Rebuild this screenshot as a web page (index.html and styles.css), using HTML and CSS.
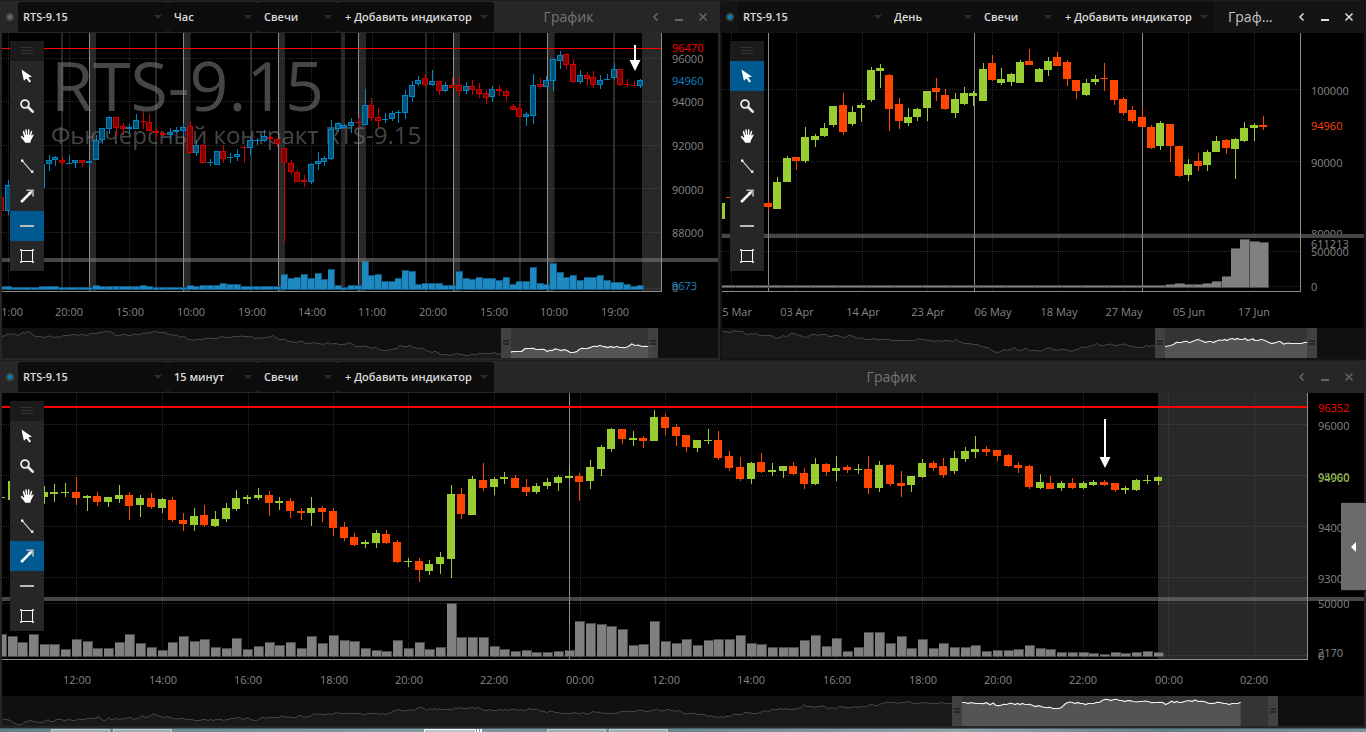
FILE: index.html
```html
<!DOCTYPE html>
<html lang="ru">
<head>
<meta charset="utf-8">
<title>RTS-9.15</title>
<link rel="stylesheet" href="styles.css">
</head>
<body>
<svg class="defs" aria-hidden="true">
  <symbol id="i-cursor" viewBox="0 0 14 14"><path d="M1.5.5 L12 7.8 L8.3 8.2 L11 12.4 L9.3 13.6 L6.5 9.4 L3.9 11.8 Z" fill="#fff"/></symbol>
  <symbol id="i-zoom" viewBox="0 0 14 14"><circle cx="5" cy="5" r="3.9" fill="none" stroke="#eee" stroke-width="1.8"/><path d="M8 8 L12.7 12.7" stroke="#eee" stroke-width="2.6" stroke-linecap="round"/></symbol>
  <symbol id="i-hand" viewBox="0 0 14 14"><path d="M4.6 7 L3.6 2.6 M6.4 6.5 L6.1 1 M8.4 6.5 L8.7 1 M10.2 7 L11.5 2.6" stroke="#fff" stroke-width="1.5" stroke-linecap="round"/><path d="M4 6.3 L11 6 L12 6.4 L13.2 5.2 Q14 5.3 13.6 6.3 L10.6 12 L10.4 13.8 L5 13.8 L4.5 12.4 L.9 8.2 Q.6 7 1.7 7.1 L4.2 9 Z" fill="#fff"/></symbol>
  <symbol id="i-line" viewBox="0 0 14 14"><path d="M2 1.5 L12 13" stroke="#eee" stroke-width="1.1"/><rect x="1" y=".5" width="2.4" height="2.4" fill="#eee"/><rect x="11" y="11.5" width="2.4" height="2.4" fill="#eee"/></symbol>
  <symbol id="i-arrow" viewBox="0 0 14 14"><path d="M1.2 13 L11 3.2" stroke="#fff" stroke-width="2.6"/><path d="M6.6 1.2 H13 V7.4" fill="none" stroke="#bbb" stroke-width="1.6"/><path d="M8 3.5 L12.3 1.7 L10.7 6 Z" fill="#fff"/></symbol>
  <symbol id="i-hline" viewBox="0 0 14 14"><path d="M0 7 H14" stroke="#bbb" stroke-width="2"/></symbol>
  <symbol id="i-rect" viewBox="0 0 14 14"><rect x="1.5" y="1.5" width="11" height="11" fill="none" stroke="#fff" stroke-width="1"/><path d="M0 0h2v2H0zM12 0h2v2h-2zM0 12h2v2H0zM12 12h2v2h-2z" fill="#ccc"/></symbol>
</svg>

<main class="desk">
  <section class="window" id="hour">
    <header class="bar">
      <input class="link-dot link-dot--idle" type="radio" name="link-hour" aria-label="Связь окон">
      <span class="pick pick--symbol"><select aria-label="Инструмент"><option>RTS-9.15</option></select></span>
      <span class="pick pick--frame"><select aria-label="Таймфрейм"><option>Час</option><option>День</option><option>15 минут</option></select></span>
      <span class="pick pick--style"><select aria-label="Тип графика"><option>Свечи</option></select></span>
      <button class="add" type="button">+ Добавить индикатор</button>
      <h2 class="title">График</h2>
    </header>
    <div class="body"></div>
  </section>

  <section class="window window--active" id="day">
    <header class="bar">
      <input class="link-dot" type="radio" name="link-day" checked aria-label="Связь окон">
      <span class="pick pick--symbol"><select aria-label="Инструмент"><option>RTS-9.15</option></select></span>
      <span class="pick pick--frame"><select aria-label="Таймфрейм"><option>День</option><option>Час</option><option>15 минут</option></select></span>
      <span class="pick pick--style"><select aria-label="Тип графика"><option>Свечи</option></select></span>
      <button class="add" type="button">+ Добавить индикатор</button>
      <h2 class="title">График</h2>
    </header>
    <div class="body"></div>
  </section>

  <section class="window window--wide" id="quarter">
    <header class="bar">
      <input class="link-dot" type="radio" name="link-quarter" checked aria-label="Связь окон">
      <span class="pick pick--symbol"><select aria-label="Инструмент"><option>RTS-9.15</option></select></span>
      <span class="pick pick--frame"><select aria-label="Таймфрейм"><option>15 минут</option><option>Час</option><option>День</option></select></span>
      <span class="pick pick--style"><select aria-label="Тип графика"><option>Свечи</option></select></span>
      <button class="add" type="button">+ Добавить индикатор</button>
      <h2 class="title">График</h2>
    </header>
    <div class="body"></div>
  </section>
</main>

<footer class="taskbar">
  <i class="task"></i><i class="task"></i><i class="task task--front"></i><i class="task task--edge"></i><i class="task task--edge"></i><i class="task task--late"></i><i class="task"></i>
</footer>

<button class="drawer" type="button" aria-label="Открыть панель"></button>
<script src="chart.js"></script>
</body>
</html>
```
FILE: styles.css
```css
* { box-sizing: border-box; }

body {
  margin: 0;
  background: #262626;
  color: #808080;
  font: 11px/16px "Open Sans", "Noto Sans", sans-serif;
  overflow: hidden;
}

.defs { position: absolute; width: 0; height: 0; }

.desk {
  display: grid;
  grid-template-columns: minmax(0, 720fr) minmax(0, 646fr);
}

.window {
  background: #262626;
  border: 2px solid #262626;
  border-top: 0;
}
.window--active { background: #141414; border-color: #141414; }
.window--wide { grid-column: 1 / -1; }

/* header */
.bar {
  display: flex;
  align-items: center;
  height: 33px;
  padding: 1px 3px 1px 0;
  border-top: 1px solid #1c1c1c;
}
.link-dot {
  appearance: none;
  flex: none;
  width: 8px;
  height: 8px;
  margin: 0 4px;
  border-radius: 50%;
  border: 1px solid #5a5a5a;
  background: radial-gradient(circle, #0084bd 2px, #222 3px);
}
.link-dot--idle { background: radial-gradient(circle, #666 2px, #222 3px); }

.pick, .add {
  position: relative;
  flex: none;
  height: 30px;
  background: #0d0d0d;
  border-radius: 3px;
}
.window--active .pick, .window--active .add { background: #0f0f0f; }
.pick--symbol { width: 150px; }
.pick--frame { width: 90px; }
.pick--style { width: 80px; }
.pick::after, .add::after {
  content: "";
  position: absolute;
  right: 6px;
  top: 13px;
  border: 4px solid transparent;
  border-top-color: #2e2e2e;
  border-bottom: 0;
}
.pick select, .add {
  appearance: none;
  border: 0;
  color: #dcdcdc;
  font: 600 11px/30px "Open Sans", "Noto Sans", sans-serif;
}
.pick select { width: 100%; height: 30px; padding: 0 0 0 6px; background: none; }
.pick--symbol select { padding-left: 5px; }
.add { width: 156px; padding: 0 0 0 7px; text-align: left; }

.title {
  flex: 1;
  min-width: 0;
  margin: 0;
  padding: 0 14px;
  overflow: hidden;
  text-overflow: ellipsis;
  white-space: nowrap;
  text-align: center;
  color: #777;
  font: 400 14px/30px "Open Sans", "Noto Sans", sans-serif;
}
.window--active .title { color: #c4c4c4; }
.caption {
  flex: none;
  width: 24px;
  height: 24px;
  padding: 0;
  border: 0;
  background: none;
  color: #666;
}
.window--active .caption { color: #ddd; }
.caption svg { display: block; margin: auto; }

/* chart */
.body {
  position: relative;
  display: grid;
  grid-template-columns: minmax(0, 1fr) 56px;
  background: #000;
}
#day .body { grid-template-columns: minmax(0, 1fr) 63px; }
.body > svg { display: block; width: 100%; }
.plot { height: 259px; border: solid #8c8c8c; border-width: 0 1px 1px 0; }
.axis { height: 259px; }
#quarter .plot, #quarter .axis { height: 267px; }
.times { height: 36px; }
.body > .times, .body > .nav { grid-column: 1 / -1; }
.nav { height: 30px; background: #101010; }

.body text { font: 11px "Open Sans", "Noto Sans", sans-serif; fill: #868686; }
.body .mark { font-size: 68px; fill: #808080; fill-opacity: .55; }
.body .mark-sub { font-size: 24px; fill: #808080; fill-opacity: .55; }
.grid { stroke: #6e6e6e; stroke-opacity: .38; stroke-dasharray: 1 1; }
.band { fill: #282828; }
.session { fill: #8c8c8c; }
.split { fill: #808080; fill-opacity: .55; }

/* drawing tools */
.tools {
  position: absolute;
  left: 8px;
  top: 8px;
  width: 34px;
  background: #262626;
}
.grip { height: 20px; padding: 6px 11px; background: #1b1b1b; }
.grip::before {
  content: "";
  display: block;
  height: 7px;
  background: repeating-linear-gradient(#333 0 1px, transparent 1px 3px);
}
.tool {
  display: flex;
  align-items: center;
  justify-content: center;
  width: 34px;
  height: 30px;
  padding: 0;
  border: 0;
  background: none;
}
.tool--on { background: #005a8f; }
.tool svg { width: 14px; height: 14px; }

.drawer {
  position: fixed;
  right: 0;
  top: 502px;
  width: 25px;
  height: 89px;
  padding: 0;
  border: solid #111;
  border-width: 1px 0;
  background: #6b6b6b;
}
.drawer::before {
  content: "";
  display: block;
  margin-left: 10px;
  width: 0;
  border: 5px solid transparent;
  border-right-color: #fff;
  border-left: 0;
}

/* taskbar */
.taskbar {
  display: flex;
  gap: 3px;
  height: 4px;
  padding-left: 51px;
  background: linear-gradient(90deg, #61808b, #839da5 30%, #6b8791 50%, #8fa5ac 70%, #637f8b 85%, #7a949d);
  border-top: 1px solid #4d5f66;
}
.task { width: 59px; border: 1px solid #c5d0d4; border-bottom: 0; background: #9caeb4; }
.task--front { width: 52px; margin-left: 249px; border-color: #fff; background: #b9c7cb; }
.task--edge { width: 2px; margin-left: -2px; border-color: #fff; }
.task--late { margin-left: 62px; }
```
FILE: chart.js
```js
const NS = 'http://www.w3.org/2000/svg';

// Rows are "colour high top bottom low"; one unit is a third of a pixel.
const CHARTS = {
  hour: {
    from: -7, x0: 147, step: 20.18, body: 6, outlined: true,
    up: ['#00527a', '#0086c0'], down: ['#800000', '#d00000'],
    split: 258, base: 867, volume: ['#1e88c0', '#11567c'], barLeft: 3, barWidth: 7,
    candles: `R 546 592 635 635;G 540 556 635 645;G 530 540 600 610;G 530 545 590 600;R 530 550 580 590;G 520 540 570 580;G 490 492 564 564;G 465 480 492 513;G 468 472 480 498;R 471 480 489 495;G 465 489 491 491;G 480 481 491 504;R 480 481 491 501;G 480 484 491 501;G 405 420 480 480;G 384 385 422 432;G 348 351 387 402;R 351 351 384 408;R 370 378 388 405;G 372 381 388 399;G 342 361 387 387;R 334 364 367 387;R 342 367 395 397;R 384 394 400 417;R 393 400 407 408;G 384 397 407 417;G 381 390 398 399;G 370 381 395 408;R 364 378 461 461;G 421 435 461 468;R 432 435 491 491;G 477 486 491 498;G 453 454 495 495;R 435 454 477 489;G 459 471 476 489;G 447 462 473 483;R 438 441 446 489;G 414 420 444 465;G 414 420 423 435;G 390 408 423 426;R 408 411 418 420;R 414 418 434 441;R 444 444 491 726;R 480 491 518 525;R 510 516 546 546;R 525 540 546 563;G 490 492 546 552;G 456 484 494 510;G 468 474 486 498;G 360 387 477 480;G 368 370 388 396;G 372 375 384 384;G 354 366 378 399;R 354 366 369 384;G 267 315 375 375;R 294 315 354 363;R 324 351 363 384;G 339 357 360 369;G 333 339 357 363;G 330 336 340 369;G 270 285 339 357;G 243 255 291 306;G 228 240 252 258;R 222 234 255 261;G 210 243 255 258;R 243 243 273 285;G 246 255 273 276;R 231 255 264 264;R 231 255 273 288;G 246 258 273 282;R 240 258 270 285;R 249 267 282 294;R 267 279 294 312;G 258 267 291 306;R 255 267 275 288;R 267 273 288 306;R 312 318 330 330;R 309 324 351 354;G 336 342 351 378;G 222 255 348 372;R 234 252 261 267;G 228 240 261 261;G 177 177 243 273;G 153 165 183 207;R 159 162 195 210;R 177 192 246 249;G 211 225 246 252;R 216 225 237 258;R 213 231 255 264;G 225 240 255 267;G 222 237 242 242;G 189 207 234 240;R 207 207 255 258;R 237 252 255 261;R 243 255 258 258;G 237 240 258 264`,
    volumes: [859,859,862,862,862,862,859,859,859,862,862,862,862,862,855,859,859,859,859,859,859,856,859,862,862,862,862,862,856,859,856,856,856,850,853,853,859,859,859,859,859,859,823,834,832,823,834,820,838,808,856,862,856,856,784,827,823,844,844,835,811,814,853,850,851,850,856,856,814,835,838,832,835,835,841,832,853,844,844,802,850,853,790,817,832,826,841,832,832,826,841,847,847,853,859,856],
    bands: [[61,2],[90,6],[155,2],[184,6],[250,2],[279,6],[341,4],[359,7],[425,2],[454,6],[519,2],[548,6],[613,2],[642,19]],
    sessions: [89,183,278,358,453,547],
    cols: [8,69,129,190,251,311,372,433,493,554,614], rows: [58,101,145,188,232,288],
    times: [['11:00',9],['20:00',69],['15:00',130],['10:00',191],['19:00',252],['14:00',312],['11:00',372],['20:00',433],['15:00',494],['10:00',554],['19:00',615]],
    prices: [['96000',59],['96470',48,'#f00'],['94960',81,'#1283c4'],['94000',102],['92000',146],['90000',190],['88000',233]],
    amounts: [['0',288],['9673',286,'#1e88c0']],
    level: [48,1], arrow: [635,45,60,71], tool: 5, mark: true,
    nav: { top: 984, sel: [501,658], end: 653, line: '6,1010 25,1001 45,1002 62,1002 70,997 75,1000 87,994 100,1006 125,1011 150,1008 170,1010 190,1007 225,1004 248,1003 262,1007 272,999 300,997 315,993 322,996 335,995 352,1007 375,1003 400,1003 420,1004 432,998 455,997 470,995 495,997 512,1003 530,1005 540,1012 550,1009 565,1019 590,1017 605,1019 625,1014 650,1016 665,1009 680,1012 700,1009 725,1008 745,1010 755,1008 770,1014 800,1013 820,1007 832,1016 855,1017 880,1026 900,1024 925,1030 940,1027 960,1031 985,1027 990,1033 1010,1031 1035,1033 1052,1028 1065,1039 1080,1039 1095,1037 1105,1042 1125,1041 1140,1050 1165,1051 1185,1046 1200,1036 1230,1036 1245,1043 1265,1044 1280,1052 1305,1054 1330,1064 1355,1065 1370,1060 1390,1064 1420,1063 1440,1059 1465,1061 1485,1057 1500,1061 1520,1058 1535,1055 1565,1054 1575,1046 1600,1045 1625,1048 1650,1051 1665,1047 1692,1049 1710,1057 1730,1055 1745,1045 1770,1043 1785,1039 1800,1036 1815,1040 1850,1039 1875,1043 1895,1032 1915,1035 1935,1039 1960,1037' }
  },
  day: {
    from: -5, x0: 145, step: 28.03, body: 8,
    up: ['#9acd32'], down: ['#ff4500'],
    split: 234, base: 861, volume: ['#808080', '#4a4a4a'], barLeft: 4, barWidth: 10,
    candles: `G 600 609 657 660;R 591 591 594 594;R 585 591 600 609;G 590 600 630 640;R 590 600 621 630;R 597 609 621 633;G 531 546 627 627;G 468 474 546 546;R 471 471 483 510;G 381 411 483 489;G 402 408 420 441;G 369 384 408 411;G 318 318 375 381;R 279 315 396 405;G 318 336 372 378;G 309 315 324 366;G 201 210 300 306;G 192 204 213 264;R 222 225 327 393;R 294 312 363 387;G 324 351 369 378;G 324 327 351 363;G 273 273 324 363;R 234 264 276 303;R 267 285 327 330;G 279 297 339 354;G 261 279 312 315;G 273 279 288 318;G 189 207 303 303;R 165 189 240 243;G 204 237 249 255;G 219 222 246 258;G 180 186 249 249;R 147 183 195 195;G 204 207 246 246;G 171 183 210 228;R 156 171 198 198;R 180 186 237 258;R 240 240 273 297;G 237 249 285 288;G 225 237 246 255;R 189 234 237 273;R 240 240 300 315;R 291 297 339 345;R 318 330 363 369;R 321 351 381 381;R 375 381 444 447;G 363 369 438 450;R 372 372 438 486;R 438 438 528 531;G 477 492 525 543;R 459 483 498 513;G 450 456 495 513;G 408 423 456 456;R 417 420 444 462;G 414 417 447 537;G 366 384 423 426;G 369 375 384 423;R 348 375 381 390`,
    volumes: [...Array(48).fill(856),854,851,854,854,851,845,830,746,719,725,728],
    bands: [], sessions: [48,254,422],
    cols: [11,76,142,207,272,338,403,468,534], rows: [89,161,233,251,286],
    times: [['25 Mar',14],['03 Apr',77],['14 Apr',143],['23 Apr',208],['06 May',273],['18 May',339],['27 May',404],['05 Jun',469],['17 Jun',534]],
    prices: [['100000',91],['94960',126,'#ff4500'],['90000',163],['80000',234]],
    amounts: [['500000',252],['611213',244],['0',287]],
    tool: 0,
    nav: { top: 984, sel: [435,597], end: 587, line: '9,995 45,992 70,995 85,1003 110,1000 125,1006 150,1006 168,1015 190,1007 200,1010 210,1002 225,1001 245,1008 262,1011 275,1003 310,1004 345,1006 375,1012 388,1005 410,1014 425,1013 445,1018 460,1015 480,1019 505,1018 525,1021 555,1022 580,1021 595,1015 620,1020 650,1023 690,1023 710,1018 725,1027 750,1031 775,1034 790,1040 805,1042 825,1056 845,1053 855,1048 870,1049 885,1043 900,1052 920,1045 930,1053 969,1050 989,1043 1009,1050 1024,1047 1044,1051 1064,1050 1084,1040 1114,1037 1129,1030 1159,1034 1174,1032 1194,1036 1214,1032 1234,1039 1259,1043 1279,1036 1304,1038 1319,1035 1344,1038 1369,1027 1399,1024 1409,1028 1434,1018 1449,1024 1489,1023 1499,1020 1529,1017 1599,1017 1604,1021 1624,1018 1644,1026 1666,1028 1679,1024 1691,1032 1704,1029 1761,1027' }
  },
  quarter: {
    from: -7, x0: 229, step: 32.13, body: 8,
    up: ['#9acd32'], down: ['#ff4500'],
    split: 237, base: 888, volume: ['#808080', '#4a4a4a'], barLeft: 4, barWidth: 10,
    candles: `G 402 413 416 459;G 363 363 420 440;R 370 380 410 420;G 380 390 410 420;G 378 396 411 432;G 372 396 402 426;G 369 396 399 411;R 351 396 414 435;G 405 408 414 453;R 396 408 426 438;G 411 411 426 441;G 375 405 417 429;R 396 405 438 480;G 405 414 435 471;R 399 414 441 447;G 414 417 444 459;R 411 420 480 486;R 459 480 492 513;G 444 468 495 513;R 435 465 495 501;G 453 477 498 501;G 429 444 477 486;G 390 414 447 453;G 405 411 417 432;G 384 405 414 420;R 393 405 429 468;G 411 423 429 450;R 414 423 453 474;R 444 453 459 480;G 411 444 459 498;R 438 444 456 486;R 444 453 504 528;R 486 501 534 543;R 519 531 555 558;G 540 546 552 564;G 510 519 549 564;R 510 522 549 552;R 540 546 606 609;G 594 603 606 621;R 594 603 630 666;G 600 612 633 645;G 576 591 612 642;G 375 402 597 654;R 384 402 462 477;G 348 357 465 465;R 309 360 384 393;G 351 357 381 405;G 336 351 357 372;R 345 354 384 384;R 357 381 396 408;G 369 378 396 402;G 354 366 378 387;G 345 351 369 393;G 321 348 354 357;R 339 348 366 423;G 300 321 363 387;G 255 261 327 348;G 204 207 267 276;R 207 207 237 252;G 213 234 240 258;R 228 234 243 264;G 150 171 243 243;R 162 171 204 225;R 192 201 228 258;R 225 225 261 276;G 240 240 264 276;G 207 240 243 252;R 213 240 294 300;R 273 288 324 333;R 291 321 357 363;G 306 309 357 372;R 279 306 336 339;G 309 330 336 348;G 318 318 333 354;R 306 318 342 345;R 324 339 372 387;G 294 312 372 375;R 309 312 336 348;G 288 324 333 363;R 315 321 330 339;G 312 327 330 342;R 288 327 384 402;G 303 315 384 396;R 312 315 372 378;R 333 369 378 411;G 348 348 375 396;G 297 309 351 354;R 303 309 324 333;R 294 318 345 354;G 273 294 333 342;G 261 273 297 306;G 228 267 276 294;R 258 267 276 288;R 270 270 288 303;R 282 285 318 321;R 306 315 324 339;R 315 318 381 387;G 342 366 384 387;R 348 369 387 387;G 363 369 384 393;R 354 369 384 387;G 363 369 384 387;G 360 366 375 378;R 360 366 375 378;R 369 369 390 396;G 378 384 390 402;G 357 360 390 393;G 345 360 363 372;G 348 351 363 375`,
    volumes: [822,828,846,822,852,852,867,837,843,864,864,846,822,849,861,870,846,828,843,837,861,864,834,867,858,846,855,846,864,828,849,825,840,843,864,870,873,840,864,846,867,861,729,831,831,831,858,867,873,870,876,876,873,870,783,789,792,798,807,855,852,783,843,849,837,855,840,837,837,825,849,852,861,861,861,840,825,858,834,873,861,816,816,849,828,864,837,864,849,861,861,855,873,870,870,867,855,864,867,876,876,876,879,882,876,879,876,873,876],
    bands: [[1158,149]], sessions: [569],
    cols: [76,162,248,333,408,494,580,665,751,836,922,997,1083,1168,1254], rows: [64,115,166,217,243,295],
    times: [['12:00',77],['14:00',163],['16:00',248],['18:00',334],['20:00',409],['22:00',494],['00:00',580],['12:00',666],['14:00',751],['16:00',837],['18:00',923],['20:00',998],['22:00',1083],['00:00',1169],['02:00',1254]],
    prices: [['96352',48,'#f00'],['96000',66],['95000',117],['94960',118,'#9acd32'],['94000',168],['93000',219]],
    amounts: [['50000',244],['0',296],['2170',293]],
    level: [46,2], arrow: [1105,59,97,108], tool: 4,
    nav: { top: 1008, sel: [952,1278], end: 1241, line: '9,1078 30,1081 40,1088 55,1094 75,1085 90,1080 110,1086 145,1080 200,1080 235,1077 270,1074 285,1075 295,1070 308,1081 325,1073 340,1077 365,1077 385,1073 415,1076 425,1066 445,1070 460,1062 475,1068 510,1072 530,1077 548,1075 560,1079 655,1079 710,1074 745,1074 760,1081 785,1072 830,1073 845,1067 880,1073 895,1067 920,1070 940,1061 960,1062 985,1060 1010,1057 1050,1060 1170,1060 1180,1053 1195,1048 1210,1053 1230,1049 1265,1042 1275,1048 1290,1046 1320,1047 1350,1048 1365,1043 1420,1043 1425,1046 1435,1042 1445,1048 1515,1048 1522,1052 1540,1048 1610,1046 1625,1053 1640,1058 1650,1053 1700,1060 1750,1058 1760,1062 1780,1054 1800,1056 1815,1059 1830,1060 1880,1053 1920,1051 1955,1051 1970,1046 1985,1053 2005,1048 2035,1052 2060,1062 2070,1060 2115,1064 2145,1070 2185,1068 2200,1062 2225,1064 2235,1057 2255,1060 2320,1047 2395,1046 2412,1034 2460,1040 2470,1037 2480,1044 2525,1040 2590,1040 2610,1034 2640,1032 2660,1026 2710,1028 2725,1023 2760,1030 2780,1028 2805,1030 2825,1026 2840,1030 2865,1029 2920,1029 2950,1031 2960,1028 2970,1034 2980,1029 2995,1037 3010,1033 3030,1030 3090,1033 3115,1037 3150,1042 3185,1042 3195,1032 3210,1026 3240,1030 3290,1027 3315,1018 3350,1018 3390,1022 3410,1026 3435,1023 3455,1028 3480,1027 3505,1030 3515,1024 3545,1027 3560,1023 3585,1020 3605,1024 3635,1030 3650,1027 3670,1030 3722,1027' }
  }
};

const TOOLS = [['cursor', 'Курсор'], ['zoom', 'Масштаб'], ['hand', 'Перемещение'], ['line', 'Отрезок'],
  ['arrow', 'Стрелка'], ['hline', 'Горизонтальная линия'], ['rect', 'Прямоугольник']];
const LEFT = 2, TOP = 33, AXIS_PAD = 10;

function el(parent, name, attrs, text) {
  const node = document.createElementNS(NS, name);
  for (const key in attrs) node.setAttribute(key, attrs[key]);
  if (text !== undefined) node.textContent = text;
  parent.appendChild(node);
  return node;
}
const rect = (p, x, y, width, height, extra) => el(p, 'rect', { x, y, width, height, ...extra });
const px = v => Math.floor(v / 3 + 0.01);

function drawPlot(body, c) {
  const svg = el(body, 'svg', { class: 'plot' });
  const g = el(svg, 'g', { transform: `translate(${-LEFT} ${-TOP})` });
  c.bands.forEach(([x, w]) => rect(g, x, TOP, w, 600, { class: 'band' }));
  c.rows.forEach(y => el(g, 'line', { class: 'grid', x1: LEFT, x2: 4000, y1: y + 0.5, y2: y + 0.5 }));
  c.cols.forEach(x => el(g, 'line', { class: 'grid', x1: x + 0.5, x2: x + 0.5, y1: TOP, y2: 600 }));
  c.sessions.forEach(x => rect(g, x, TOP, 1, 600, { class: 'session' }));
  if (c.mark) {
    el(g, 'text', { class: 'mark', x: 51, y: 111 }, 'RTS-9.15');
    el(g, 'text', { class: 'mark-sub', x: 51, y: 144 }, 'Фьючерсный контракт RTS-9.15');
  }
  c.candles.split(';').forEach((row, i) => {
    const [kind, ...v] = row.split(' ');
    const [high, top, bottom, low] = v.map(Number);
    const [fill, stroke] = kind === 'G' ? c.up : c.down;
    const x = px(c.x0 + (c.from + i) * c.step), half = c.body / 2;
    rect(g, x, px(high), 1, Math.max(1, px(low) - px(high)), { fill: stroke || fill });
    const h = Math.max(1, px(bottom) - px(top));
    if (c.outlined && h > 2) {
      rect(g, x - half + 0.5, px(top) + 0.5, c.body - 1, h - 1, { fill, stroke });
    } else {
      rect(g, x - half, px(top), c.body, h, { fill: stroke || fill });
    }
  });
  const base = px(c.base);
  c.volumes.forEach((v, i) => {
    const x = px(c.x0 + (c.from + i) * c.step) - c.barLeft, y = px(v);
    rect(g, x, y, c.barWidth, base - y + 1, { fill: c.volume[1] });
    rect(g, x, y + 1, c.barWidth - 1, Math.max(1, base - y - 1), { fill: c.volume[0] });
  });
  rect(g, 0, c.split, 4000, 4, { class: 'split' });
  if (c.level) rect(g, 0, c.level[0], 4000, c.level[1], { fill: '#f00' });
  if (c.arrow) {
    const [x, y1, y2, y3] = c.arrow;
    rect(g, x - 1, y1, 2, y2 - y1 + 1, { fill: '#fff' });
    el(g, 'path', { d: `M${x - 5.5} ${y2}H${x + 5.5}L${x} ${y3}Z`, fill: '#fff' });
  }
}

function drawAxis(body, c) {
  const svg = el(body, 'svg', { class: 'axis' });
  const cut = c.split - TOP;
  const price = el(svg, 'svg', { y: 0, width: '100%', height: cut });
  const amount = el(svg, 'svg', { y: cut, width: '100%', height: 80 });
  const put = (pane, offset) => ([label, y, color]) =>
    el(pane, 'text', { x: AXIS_PAD, y: y - offset + 4, ...(color && { style: `fill:${color}` }) }, label);
  c.prices.forEach(put(price, TOP));
  c.amounts.forEach(put(amount, c.split));
  rect(svg, 0, cut, '100%', 4, { class: 'split' });
}

function drawTimes(body, c) {
  const svg = el(body, 'svg', { class: 'times' });
  c.times.forEach(([label, x]) => el(svg, 'text', { x: x - LEFT, y: 24, 'text-anchor': 'middle' }, label));
}

// Fills the gaps between key points with small alternating ticks.
function roughen(points) {
  const out = [];
  let seed = 7;
  points.forEach(([x, y], i) => {
    out.push([x, y]);
    const next = points[i + 1];
    if (!next) return;
    const n = Math.floor((next[0] - x) / 2.5);
    for (let k = 1; k < n; k++) {
      seed = (seed * 73 + 41) % 1009;
      const t = k / n;
      out.push([x + (next[0] - x) * t, Math.round(y + (next[1] - y) * t + (seed % 3 - 1) * 0.55) + 0.5]);
    }
  });
  return out;
}

function drawNav(body, c, id) {
  const n = c.nav, [a, b] = n.sel;
  const keys = n.line.split(' ').map(p => p.split(',').map(Number)).map(([x, y]) => [x / 3 - LEFT, (y - n.top) / 3]);
  const pts = roughen(keys);
  const line = 'M' + pts.map(p => p.map(v => v.toFixed(1)).join(' ')).join('L');
  const last = pts[pts.length - 1][0];
  const area = `${line}L${last} 30L0 30L0 ${pts[0][1]}Z`;
  const svg = el(body, 'svg', { class: 'nav' });
  el(svg, 'path', { d: area, fill: '#191919' });
  el(svg, 'path', { d: line, fill: 'none', stroke: '#484848' });
  rect(svg, a - LEFT, 0, b - a, 30, { fill: '#343434' });
  const clip = el(svg, 'clipPath', { id: `sel-${id}` });
  rect(clip, a + 10 - LEFT, 0, n.end - a - 10, 30);
  const inner = el(svg, 'g', { 'clip-path': `url(#sel-${id})` });
  el(inner, 'path', { d: area, fill: '#545454' });
  el(inner, 'path', { d: line, fill: 'none', stroke: '#f0f0f0', 'stroke-width': 1.2 });
  [a, b - 10].forEach(x => {
    rect(svg, x - LEFT, 0, 10, 30, { fill: '#444', 'fill-opacity': 0.85 });
    rect(svg, x + 2 - LEFT, 12, 6, 2, { fill: '#282828' });
    rect(svg, x + 2 - LEFT, 15, 6, 2, { fill: '#282828' });
  });
}

function addTools(body, active) {
  const box = document.createElement('div');
  box.className = 'tools';
  box.innerHTML = '<div class="grip"></div>' + TOOLS.map(([icon, label], i) =>
    `<button type="button" class="tool${i === active ? ' tool--on' : ''}" aria-label="${label}"><svg><use href="#i-${icon}"/></svg></button>`).join('');
  body.appendChild(box);
}

function addCaptions(bar) {
  [['Назад', 'M8.5 2.5L5 6L8.5 9.5'], ['Свернуть', 'M2 9H10'], ['Закрыть', 'M2.5 2.5L9.5 9.5M9.5 2.5L2.5 9.5']].forEach(([label, d], i) => {
    const b = document.createElement('button');
    b.type = 'button';
    b.className = 'caption';
    b.setAttribute('aria-label', label);
    b.innerHTML = `<svg width="12" height="12"><path d="${d}" fill="none" stroke="currentColor" stroke-width="${i === 1 ? 2 : 1.5}"/></svg>`;
    bar.appendChild(b);
  });
}

for (const id in CHARTS) {
  const win = document.getElementById(id), body = win.querySelector('.body'), c = CHARTS[id];
  drawPlot(body, c);
  drawAxis(body, c);
  drawTimes(body, c);
  drawNav(body, c, id);
  addTools(body, c.tool);
  addCaptions(win.querySelector('.bar'));
}
```
